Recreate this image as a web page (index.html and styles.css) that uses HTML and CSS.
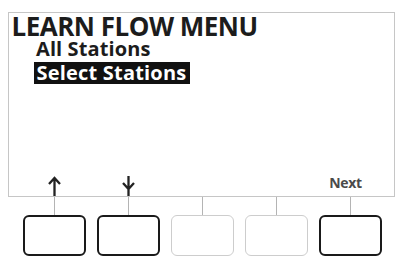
FILE: index.html
```html
<!DOCTYPE html>
<html>
<head>
<meta charset="utf-8">
<link rel="stylesheet" href="styles.css">
</head>
<body>
<div class="device">
  <div class="screen">
    <div class="title">LEARN FLOW MENU</div>
    <div class="item">All Stations</div>
    <div class="item sel"><span>Select Stations</span></div>
    <div class="spacer"></div>
    <div class="labels">
      <div class="slot">
        <svg width="63" height="20" viewBox="0 0 63 20"><path d="M31.5 2 V20 M26 8 L31.5 2 L37 8" fill="none" stroke="#222" stroke-width="2.3"/></svg>
      </div>
      <div class="slot">
        <svg width="63" height="20" viewBox="0 0 63 20"><path d="M31.5 0 V20 M26 7 L31.5 13 L37 7" fill="none" stroke="#222" stroke-width="2.3"/></svg>
      </div>
      <div class="slot"></div>
      <div class="slot"></div>
      <div class="slot next">Next</div>
    </div>
  </div>
  <div class="keys">
    <div class="kcol"><div class="wire"></div><div class="key dark"></div></div>
    <div class="kcol"><div class="wire"></div><div class="key dark"></div></div>
    <div class="kcol"><div class="wire"></div><div class="key"></div></div>
    <div class="kcol"><div class="wire"></div><div class="key"></div></div>
    <div class="kcol"><div class="wire"></div><div class="key dark"></div></div>
  </div>
</div>
</body>
</html>
```
FILE: styles.css
```css
html, body {
  margin: 0;
  padding: 0;
  background: #fff;
}
body {
  width: 399px;
  height: 262px;
  overflow: hidden;
  font-family: "Open Sans", "Noto Sans", sans-serif;
}
.device {
  padding-top: 12px;
}
.screen {
  margin-left: 8px;
  width: 387px;
  height: 185px;
  box-sizing: border-box;
  border: 1.5px solid #c6c6c6;
  display: flex;
  flex-direction: column;
}
.title {
  font-weight: 700;
  font-size: 26px;
  line-height: 26px;
  padding-left: 2.5px;
  color: #1c1c1c;
  letter-spacing: -0.5px;
}
.item {
  font-weight: 700;
  font-size: 20px;
  line-height: 20px;
  padding-left: 27px;
  color: #1c1c1c;
  letter-spacing: 0.1px;
}
.item.sel {
  margin-top: 2.5px;
  padding-left: 24.5px;
  letter-spacing: 0.2px;
}
.item.sel span {
  display: inline-block;
  background: #111;
  color: #fff;
  padding: 1.5px 4px 0.5px 3px;
  line-height: 20px;
}
.spacer {
  flex: 1;
}
.labels {
  display: flex;
  gap: 11px;
  padding-left: 13.5px;
  height: 20px;
  align-items: flex-end;
}
.slot {
  width: 63px;
  height: 20px;
  display: flex;
  justify-content: center;
}
.slot svg {
  display: block;
}
.next {
  font-weight: 700;
  font-size: 14px;
  color: #4a4a4a;
  line-height: 14px;
  align-items: flex-start;
  padding-right: 9px;
  box-sizing: border-box;
  letter-spacing: -0.3px;
}
.keys {
  display: flex;
  gap: 11px;
  padding-left: 23px;
}
.kcol {
  display: flex;
  flex-direction: column;
  align-items: center;
  width: 63px;
}
.wire {
  width: 1px;
  height: 18px;
  background: #b4b4b4;
}
.key {
  width: 63px;
  height: 41px;
  box-sizing: border-box;
  border: 1.5px solid #cdcdcd;
  border-radius: 6px;
}
.key.dark {
  border: 2.5px solid #1a1a1a;
}
```
